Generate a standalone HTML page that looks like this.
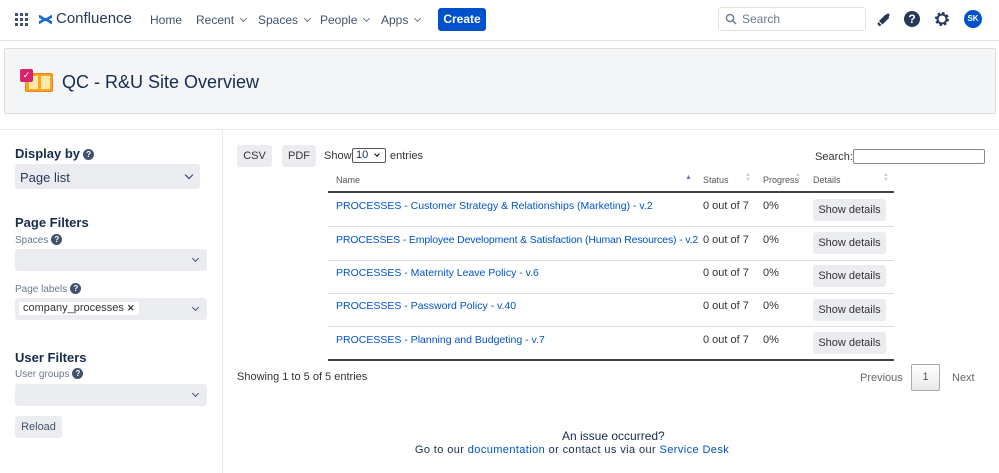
<!DOCTYPE html>
<html><head><meta charset="utf-8"><style>
*{box-sizing:border-box;margin:0;padding:0}
body{width:999px;height:473px;overflow:hidden;background:#fff;font-family:"Liberation Sans",sans-serif;color:#172b4d;position:relative}
.a{position:absolute;white-space:nowrap}
.nav{font-size:12px;color:#42526e}
.chev{display:inline-block;width:5px;height:5px;border-right:1.2px solid #6b778c;border-bottom:1.2px solid #6b778c;transform:rotate(45deg);margin-left:7px;position:relative;top:-3px}
.btn{background:#ebecf0;border-radius:3px;font-size:11px;color:#333;text-align:center}
.lnk{color:#0052cc;font-size:10.5px}
.td{font-size:11px;color:#333}
.hl{position:absolute;left:328px;width:566px;height:1px;background:#ddd}
.sel{position:absolute;left:15px;width:192px;height:22px;background:#ebecf0;border-radius:3px}
.sel:after{content:"";position:absolute;right:9px;top:7px;width:4px;height:4px;border-right:1.3px solid #42526e;border-bottom:1.3px solid #42526e;transform:rotate(45deg)}
.q{display:inline-block;width:11px;height:11px;border-radius:50%;background:#42526e;color:#fff;font-size:8px;text-align:center;line-height:11px;font-weight:bold;vertical-align:1px;margin-left:3px}
.lbl{font-size:10px;color:#6b778c}
.h{font-size:13px;font-weight:bold;color:#172b4d}
</style></head><body>
<div class="a" style="left:0;top:40px;width:999px;height:1px;background:#dfe1e6"></div>
<svg class="a" style="left:15px;top:13px" width="13" height="13" viewBox="0 0 13 13" fill="#42526e"><rect x="0" y="0" width="3" height="3"/><rect x="5" y="0" width="3" height="3"/><rect x="10" y="0" width="3" height="3"/><rect x="0" y="5" width="3" height="3"/><rect x="5" y="5" width="3" height="3"/><rect x="10" y="5" width="3" height="3"/><rect x="0" y="10" width="3" height="3"/><rect x="5" y="10" width="3" height="3"/><rect x="10" y="10" width="3" height="3"/></svg>
<svg class="a" style="left:38px;top:12px" width="15" height="15" viewBox="0 0 15 15" fill="#1868db"><path d="M1 3c3 0 4 3 6.5 3S12 3 14 3v3c-2 0-4 3-6.5 3S3 6 1 6z"/><path d="M1 9c2 0 4-3 6.5-3S12 9 14 9v3c-3 0-4-3-6.5-3S3 12 1 12z"/></svg>
<div class="a" style="left:56px;top:10px;font-size:15px;color:#253858">Confluence</div>
<div class="a nav" style="left:150px;top:13px">Home</div>
<div class="a nav" style="left:196px;top:13px">Recent<span class="chev"></span></div>
<div class="a nav" style="left:258px;top:13px">Spaces<span class="chev"></span></div>
<div class="a nav" style="left:320px;top:13px">People<span class="chev"></span></div>
<div class="a nav" style="left:381px;top:13px">Apps<span class="chev"></span></div>
<div class="a" style="left:438px;top:8px;width:48px;height:23px;background:#0052cc;border-radius:3px;color:#fff;font-size:12px;font-weight:bold;text-align:center;line-height:23px">Create</div>
<div class="a" style="left:718px;top:7px;width:148px;height:24px;border:1.5px solid #dfe1e6;border-radius:3px"></div>
<svg class="a" style="left:725px;top:13px" width="12" height="12" viewBox="0 0 12 12" fill="none" stroke="#6b778c" stroke-width="1.4"><circle cx="5" cy="5" r="3.6"/><path d="M7.6 7.6 11 11"/></svg>
<div class="a" style="left:742px;top:12px;font-size:12px;color:#6b778c">Search</div>
<svg class="a" style="left:876px;top:11px" width="16" height="16" viewBox="0 0 16 16" fill="#253858"><path d="M3 10 9.5 3.5c2 0 3.5 1.5 3.5 3.5L6.5 13.5z"/><path d="M2.5 11l3 3-2 1.2-2.2-2.2z"/><circle cx="12" cy="4" r="1.5"/></svg>
<div class="a" style="left:904px;top:11px;width:16px;height:16px;border-radius:50%;background:#253858;color:#fff;font-size:12px;font-weight:bold;text-align:center;line-height:16px">?</div>
<svg class="a" style="left:934px;top:11px" width="16" height="16" viewBox="0 0 16 16"><circle cx="8" cy="8" r="5.5" fill="none" stroke="#253858" stroke-width="3" stroke-dasharray="2.3 2"/><circle cx="8" cy="8" r="4.5" fill="none" stroke="#253858" stroke-width="2"/></svg>
<div class="a" style="left:964px;top:10px;width:18px;height:18px;border-radius:50%;background:#0052cc;color:#fff;font-size:8px;font-weight:bold;text-align:center;line-height:18px">SK</div>
<div class="a" style="left:4px;top:48px;width:992px;height:66px;background:#f4f5f7;border:1px solid #dcdcdc;border-radius:2px"></div>
<div class="a" style="left:25px;top:73px;width:28px;height:19px;background:#f7a823;border-radius:2px;border:1px solid #f08020"></div>
<div class="a" style="left:29px;top:76px;width:9px;height:13px;background:#fde7a8"></div>
<div class="a" style="left:41px;top:76px;width:9px;height:13px;background:#fde7a8"></div>
<div class="a" style="left:20px;top:69px;width:13px;height:13px;background:#d6246e;border-radius:2px;color:#fff;font-size:9px;text-align:center;line-height:13px">✓</div>
<div class="a" style="left:62px;top:72px;font-size:18px;color:#172b4d">QC - R&amp;U Site Overview</div>
<div class="a" style="left:0;top:129px;width:999px;height:1px;background:#e8e8e8"></div>
<div class="a" style="left:222px;top:130px;width:1px;height:343px;background:#e8e8e8"></div>
<div class="a h" style="left:15px;top:146px">Display by<span class="q">?</span></div>
<div class="a" style="left:15px;top:164px;width:185px;height:25px;background:#ebecf0;border-radius:3px;font-size:13px;color:#253858;padding:6px 5px">Page list</div>
<div class="a" style="left:186px;top:172px;width:6px;height:6px;border-right:1.6px solid #253858;border-bottom:1.6px solid #253858;transform:rotate(45deg)"></div>
<div class="a h" style="left:15px;top:215px">Page Filters</div>
<div class="a lbl" style="left:15px;top:234px">Spaces<span class="q">?</span></div>
<div class="sel" style="top:249px"></div>
<div class="a lbl" style="left:15px;top:283px">Page labels<span class="q">?</span></div>
<div class="sel" style="top:298px"></div>
<div class="a" style="left:19px;top:302px;height:13px;background:#fff;font-size:11px;color:#333;padding:0 4px;line-height:13px">company_processes <b style="font-size:9px">✕</b></div>
<div class="a h" style="left:15px;top:350px">User Filters</div>
<div class="a lbl" style="left:15px;top:368px">User groups<span class="q">?</span></div>
<div class="sel" style="top:384px"></div>
<div class="a btn" style="left:15px;top:416px;width:47px;height:22px;line-height:22px;color:#42526e">Reload</div>
<div class="a btn" style="left:237px;top:145px;width:35px;height:22px;line-height:22px">CSV</div>
<div class="a btn" style="left:282px;top:145px;width:34px;height:22px;line-height:22px">PDF</div>
<div class="a td" style="left:324px;top:150px">Show</div>
<div class="a" style="left:352px;top:148px;width:34px;height:15px;border:1px solid #555;border-radius:2px;font-size:11px;padding-left:3px;line-height:13px">10</div>
<div class="a" style="left:375px;top:152px;width:4px;height:4px;border-right:1.3px solid #000;border-bottom:1.3px solid #000;transform:rotate(45deg)"></div>
<div class="a td" style="left:390px;top:150px">entries</div>
<div class="a td" style="left:815px;top:151px">Search:</div>
<div class="a" style="left:853px;top:149px;width:132px;height:15px;border:1px solid #888;border-radius:2px"></div>
<div class="a" style="left:336px;top:175px;font-size:9px;color:#555">Name</div>
<div class="a" style="left:685px;top:174px;font-size:7px;color:#6677dd">▲</div>
<div class="a" style="left:703px;top:175px;font-size:9px;color:#555">Status</div>
<div class="a" style="left:763px;top:175px;font-size:9px;color:#555">Progress</div>
<div class="a" style="left:813px;top:175px;font-size:9px;color:#555">Details</div>
<div class="a" style="left:745px;top:173px;font-size:6px;color:#ccc;line-height:5px">▲<br>▼</div>
<div class="a" style="left:795px;top:173px;font-size:6px;color:#ccc;line-height:5px">▲<br>▼</div>
<div class="a" style="left:883px;top:173px;font-size:6px;color:#ccc;line-height:5px">▲<br>▼</div>
<div class="a" style="left:328px;top:191px;width:566px;height:2px;background:#444"></div>
<div class="hl" style="top:226px"></div><div class="hl" style="top:260px"></div><div class="hl" style="top:293px"></div><div class="hl" style="top:326px"></div>
<div class="a" style="left:328px;top:359px;width:566px;height:1.5px;background:#444"></div>
<div class="a lnk" style="left:336px;top:200px">PROCESSES - Customer Strategy &amp; Relationships (Marketing) - v.2</div>
<div class="a lnk" style="left:336px;top:234px;letter-spacing:-0.15px">PROCESSES - Employee Development &amp; Satisfaction (Human Resources) - v.2</div>
<div class="a lnk" style="left:336px;top:267px">PROCESSES - Maternity Leave Policy - v.6</div>
<div class="a lnk" style="left:336px;top:300px">PROCESSES - Password Policy - v.40</div>
<div class="a lnk" style="left:336px;top:334px">PROCESSES - Planning and Budgeting - v.7</div>
<div class="a td" style="left:703px;top:200px">0 out of 7</div><div class="a td" style="left:763px;top:200px">0%</div>
<div class="a td" style="left:703px;top:234px">0 out of 7</div><div class="a td" style="left:763px;top:234px">0%</div>
<div class="a td" style="left:703px;top:267px">0 out of 7</div><div class="a td" style="left:763px;top:267px">0%</div>
<div class="a td" style="left:703px;top:300px">0 out of 7</div><div class="a td" style="left:763px;top:300px">0%</div>
<div class="a td" style="left:703px;top:334px">0 out of 7</div><div class="a td" style="left:763px;top:334px">0%</div>
<div class="a btn" style="left:813px;top:199px;width:73px;height:22px;line-height:22px">Show details</div>
<div class="a btn" style="left:813px;top:232px;width:73px;height:22px;line-height:22px">Show details</div>
<div class="a btn" style="left:813px;top:265px;width:73px;height:22px;line-height:22px">Show details</div>
<div class="a btn" style="left:813px;top:299px;width:73px;height:22px;line-height:22px">Show details</div>
<div class="a btn" style="left:813px;top:332px;width:73px;height:22px;line-height:22px">Show details</div>
<div class="a td" style="left:237px;top:371px">Showing 1 to 5 of 5 entries</div>
<div class="a td" style="left:860px;top:372px;color:#666">Previous</div>
<div class="a" style="left:911px;top:364px;width:29px;height:27px;border:1px solid #aaa;border-radius:2px;background:linear-gradient(#fff,#e8e8e8);font-size:11px;color:#555;text-align:center;line-height:25px">1</div>
<div class="a td" style="left:952px;top:372px;color:#666">Next</div>
<div class="a" style="left:562px;top:429px;font-size:12px;color:#172b4d">An issue occurred?</div>
<div class="a" style="left:396px;top:444px;width:352px;text-align:center;font-size:11px;color:#172b4d;letter-spacing:0.4px">Go to our <span style="color:#0052cc">documentation</span> or contact us via our <span style="color:#0052cc">Service Desk</span></div>
</body></html>
